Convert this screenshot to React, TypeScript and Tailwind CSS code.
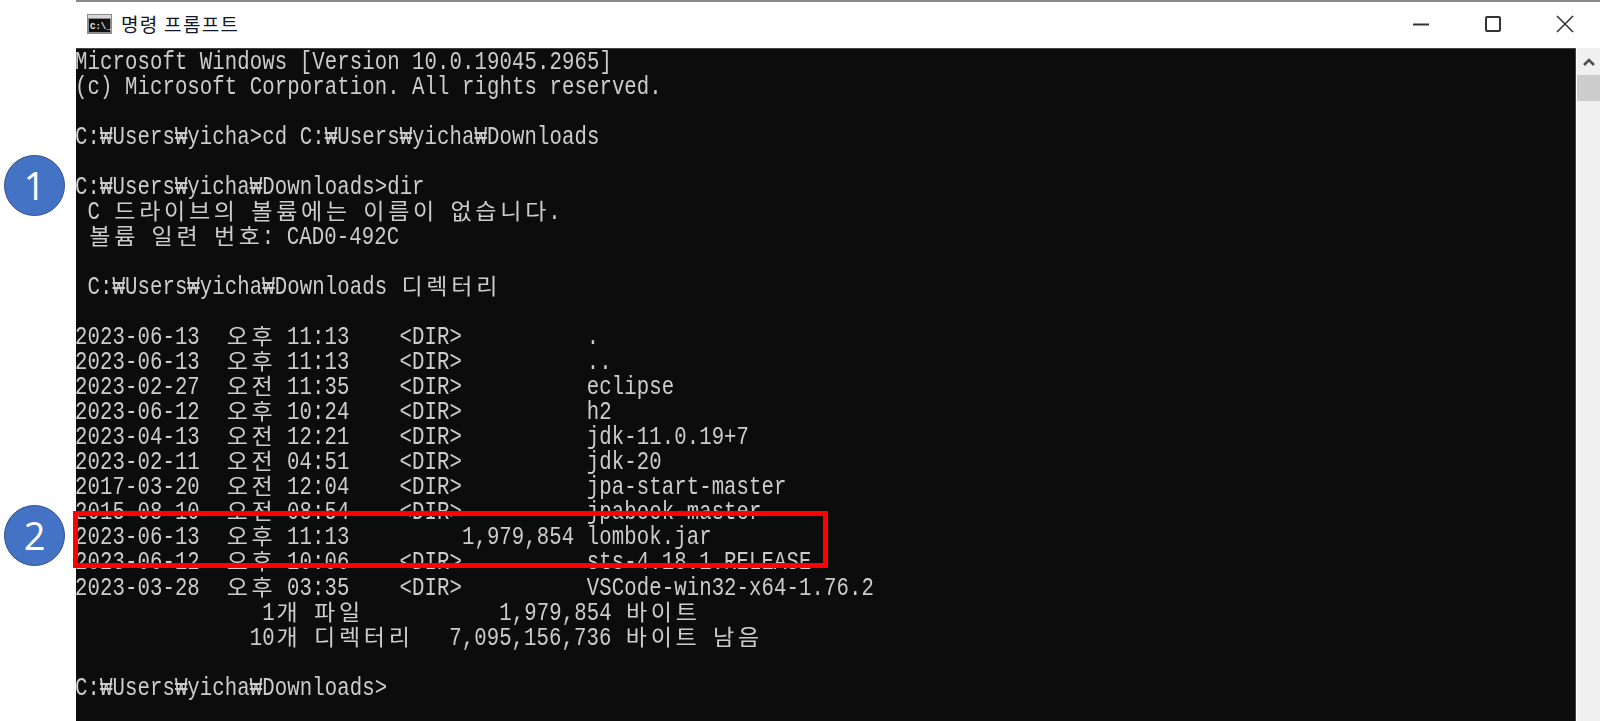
const lines = [
  "Microsoft Windows [Version 10.0.19045.2965]",
  "(c) Microsoft Corporation. All rights reserved.",
  "",
  "C:₩Users₩yicha>cd C:₩Users₩yicha₩Downloads",
  "",
  "C:₩Users₩yicha₩Downloads>dir",
  " C 드라이브의 볼륨에는 이름이 없습니다.",
  " 볼륨 일련 번호: CAD0-492C",
  "",
  " C:₩Users₩yicha₩Downloads 디렉터리",
  "",
  "2023-06-13  오후 11:13    <DIR>          .",
  "2023-06-13  오후 11:13    <DIR>          ..",
  "2023-02-27  오전 11:35    <DIR>          eclipse",
  "2023-06-12  오후 10:24    <DIR>          h2",
  "2023-04-13  오전 12:21    <DIR>          jdk-11.0.19+7",
  "2023-02-11  오전 04:51    <DIR>          jdk-20",
  "2017-03-20  오전 12:04    <DIR>          jpa-start-master",
  "2015-08-10  오전 08:54    <DIR>          jpabook-master",
  "2023-06-13  오후 11:13         1,979,854 lombok.jar",
  "2023-06-12  오후 10:06    <DIR>          sts-4.18.1.RELEASE",
  "2023-03-28  오후 03:35    <DIR>          VSCode-win32-x64-1.76.2",
  "               1개 파일           1,979,854 바이트",
  "              10개 디렉터리   7,095,156,736 바이트 남음",
  "",
  "C:₩Users₩yicha₩Downloads>",
];

function Row({ text }: { text: string }) {
  const parts = text.split(/([가-힣])/);
  return (
    <div className="h-[25.05px] flex items-center -ml-[1px]">
      <div className="h-[20px] leading-[20px] whitespace-pre scale-y-[1.25]">
        {parts.map((p, i) =>
          i % 2 === 1 ? (
            <span key={i} className="inline-block align-top h-[20px] leading-[20px] w-[24.9px] text-center text-[23px] scale-y-[0.76]">
              {p}
            </span>
          ) : (
            <span key={i}>{p}</span>
          ),
        )}
      </div>
    </div>
  );
}

function Badge({ n, pos }: { n: string; pos: string }) {
  return (
    <div
      className={`absolute left-[4px] w-[61px] h-[61px] rounded-full bg-[#4472c4] border border-[#2f528f] flex items-center justify-center text-white text-[38px] font-['Open_Sans',sans-serif] font-normal ${pos}`}
    >
      {n}
    </div>
  );
}

export default function App() {
  return (
    <div className="relative h-[721px] w-[1600px] overflow-hidden bg-white flex flex-col pl-[76px]">
      <div className="h-[48px] border-t-2 border-[#8a8a8a] flex items-center shrink-0">
        <svg width="25" height="20" viewBox="0 0 25 20" className="ml-[11px] mb-[3px]">
          <rect width="25" height="20" fill="#8c8c8c" />
          <rect x="1" y="1" width="23" height="3" fill="#d8d8d8" />
          <rect x="2" y="5" width="21" height="13" fill="#111111" />
          <text x="3" y="15" fontSize="9" fontWeight="700" fill="#e8e8e8" fontFamily="'Liberation Mono', monospace">
            C:\_
          </text>
        </svg>
        <span className="ml-[9px] mb-[4px] text-[19px] leading-none text-[#111827] tracking-[1.3px] font-['Noto_Sans_CJK_KR',sans-serif]">
          명령 프롬프트
        </span>
        <div className="ml-auto flex items-center mb-[2px]">
          <svg width="18" height="16" viewBox="0 0 18 16" className="mr-[54px]" fill="none" stroke="#333" strokeWidth="2">
            <path d="M1 8.5 H17" />
          </svg>
          <svg width="18" height="18" viewBox="0 0 18 18" className="mr-[54px]" fill="none" stroke="#333" strokeWidth="2">
            <rect x="2" y="2" width="14" height="14" rx="1" />
          </svg>
          <svg width="18" height="18" viewBox="0 0 18 18" className="mr-[26px]" fill="none" stroke="#333" strokeWidth="1.6">
            <path d="M1 1 L17 17 M17 1 L1 17" />
          </svg>
        </div>
      </div>
      <div className="flex flex-1 min-h-0">
        <div className="w-[1500px] pt-[1px] bg-[#0c0c0c] border-t border-r border-[#444444] text-[#cccccc] text-[20.67px] tracking-[0.09px] font-['Liberation_Mono','Noto_Sans_CJK_KR',monospace] overflow-hidden blur-[0.3px]">
          {lines.map((l, i) => (
            <Row key={i} text={l} />
          ))}
        </div>
        <div className="ml-[1px] w-[23px] bg-[#f0f0f0] flex flex-col">
          <div className="h-[27px] flex items-center justify-center">
            <svg width="14" height="10" viewBox="0 0 14 10" fill="none" stroke="#505050" strokeWidth="2.6">
              <path d="M2 8 L7 3 L12 8" />
            </svg>
          </div>
          <div className="h-[26px] bg-[#cdcdcd]" />
        </div>
      </div>
      <Badge n="1" pos="top-[155px]" />
      <Badge n="2" pos="top-[505px]" />
      <div className="absolute left-[73px] top-[511px] w-[755px] h-[57px] border-[5px] border-[#ff0000]" />
    </div>
  );
}
